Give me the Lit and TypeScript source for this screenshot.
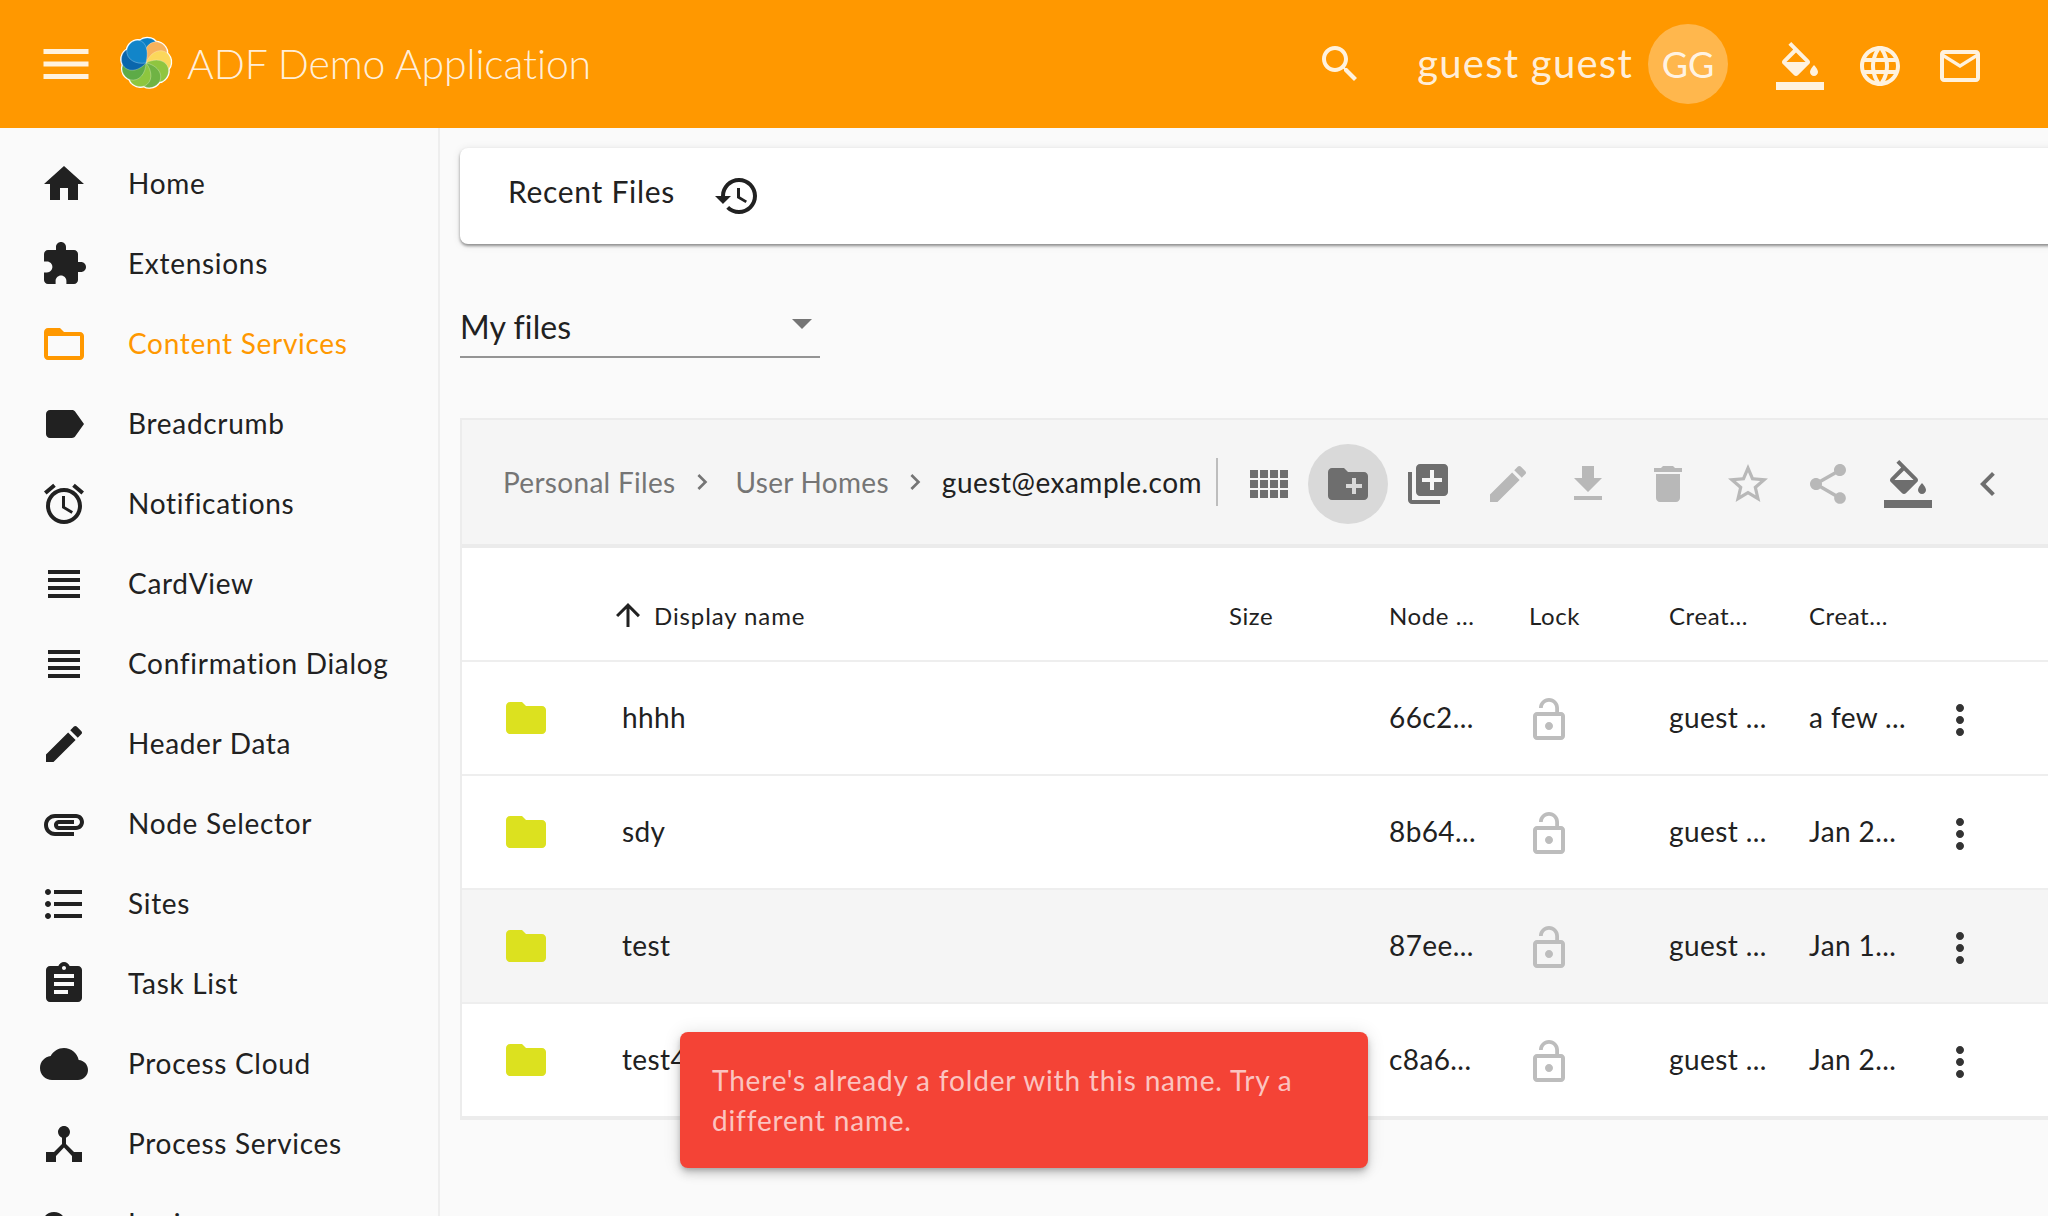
import { LitElement, css, html, svg } from 'lit';
import { customElement } from 'lit/decorators.js';

const P: Record<string, string> = {
  menu: 'M3 18h18v-2H3v2zm0-5h18v-2H3v2zm0-7v2h18V6H3z',
  home: 'M10 20v-6h4v6h5v-8h3L12 3 2 12h3v8z',
  extension: 'M20.5 11H19V7c0-1.1-.9-2-2-2h-4V3.5C13 2.12 11.88 1 10.5 1S8 2.12 8 3.5V5H4c-1.1 0-1.99.9-1.99 2v3.8H3.5c1.49 0 2.7 1.21 2.7 2.7s-1.21 2.7-2.7 2.7H2V20c0 1.1.9 2 2 2h3.8v-1.5c0-1.49 1.21-2.7 2.7-2.7 1.49 0 2.7 1.21 2.7 2.7V22H17c1.1 0 2-.9 2-2v-4h1.5c1.38 0 2.5-1.12 2.5-2.5S21.88 11 20.5 11z',
  folderOpen: 'M20 6h-8l-2-2H4c-1.1 0-1.99.9-1.99 2L2 18c0 1.1.9 2 2 2h16c1.1 0 2-.9 2-2V8c0-1.1-.9-2-2-2zm0 12H4V8h16v10z',
  label: 'M17.63 5.84C17.27 5.33 16.67 5 16 5L5 5.01C3.9 5.01 3 5.9 3 7v10c0 1.1.9 1.99 2 1.99L16 19c.67 0 1.27-.33 1.63-.84L22 12l-4.37-6.16z',
  alarm: 'M22 5.72l-4.6-3.86-1.29 1.53 4.6 3.86L22 5.72zM7.88 3.39L6.6 1.86 2 5.71l1.29 1.53 4.59-3.85zM12.5 8H11v6l4.75 2.85.75-1.23-4-2.37V8zM12 4c-4.97 0-9 4.03-9 9s4.03 9 9 9 9-4.03 9-9-4.03-9-9-9zm0 16c-3.87 0-7-3.13-7-7s3.13-7 7-7 7 3.13 7 7-3.13 7-7 7z',
  headline: 'M4 15h16v-2H4v2zm0 4h16v-2H4v2zm0-8h16V9H4v2zm0-6v2h16V5H4z',
  edit: 'M3 17.25V21h3.75L17.81 9.94l-3.75-3.75L3 17.25zM20.71 7.04c.39-.39.39-1.02 0-1.41l-2.34-2.34c-.39-.39-1.02-.39-1.41 0l-1.83 1.83 3.75 3.75 1.83-1.83z',
  attachment: 'M2 12.5C2 9.46 4.46 7 7.5 7H18c2.21 0 4 1.79 4 4s-1.79 4-4 4H9.5C8.12 15 7 13.88 7 12.5S8.12 10 9.5 10H17v2H9.41c-.55 0-.55 1 0 1H18c1.1 0 2-.9 2-2s-.9-2-2-2H7.5C5.57 9 4 10.57 4 12.5S5.57 16 7.5 16H17v2H7.5C4.46 18 2 15.54 2 12.5z',
  list: 'M4 10.5c-.83 0-1.5.67-1.5 1.5s.67 1.5 1.5 1.5 1.5-.67 1.5-1.5-.67-1.5-1.5-1.5zm0-6c-.83 0-1.5.67-1.5 1.5S3.17 7.5 4 7.5 5.5 6.83 5.5 6 4.83 4.5 4 4.5zm0 12c-.83 0-1.5.68-1.5 1.5s.68 1.5 1.5 1.5 1.5-.68 1.5-1.5-.67-1.5-1.5-1.5zM7 19h14v-2H7v2zm0-6h14v-2H7v2zm0-8v2h14V5H7z',
  assignment: 'M19 3h-4.18C14.4 1.84 13.3 1 12 1c-1.3 0-2.4.84-2.82 2H5c-1.1 0-2 .9-2 2v14c0 1.1.9 2 2 2h14c1.1 0 2-.9 2-2V5c0-1.1-.9-2-2-2zm-7 0c.55 0 1 .45 1 1s-.45 1-1 1-1-.45-1-1 .45-1 1-1zm2 14H7v-2h7v2zm3-4H7v-2h10v2zm0-4H7V7h10v2z',
  cloud: 'M19.35 10.04C18.67 6.59 15.64 4 12 4 9.11 4 6.6 5.64 5.35 8.04 2.34 8.36 0 10.91 0 14c0 3.31 2.69 6 6 6h13c2.76 0 5-2.24 5-5 0-2.64-2.05-4.78-4.65-4.96z',
  hub: 'M17 16l-4-4V8.82C14.16 8.4 15 7.3 15 6c0-1.66-1.34-3-3-3S9 4.34 9 6c0 1.3.84 2.4 2 2.82V12l-4 4H3v5h5v-3.05l4-4.2 4 4.2V21h5v-5h-4z',
  key: 'M12.65 10C11.83 7.67 9.61 6 7 6c-3.31 0-6 2.69-6 6s2.69 6 6 6c2.61 0 4.83-1.67 5.65-4H17v4h4v-4h2v-4H12.65zM7 14c-1.1 0-2-.9-2-2s.9-2 2-2 2 .9 2 2-.9 2-2 2z',
  search: 'M15.5 14h-.79l-.28-.27C15.41 12.59 16 11.11 16 9.5 16 5.91 13.09 3 9.5 3S3 5.91 3 9.5 5.91 16 9.5 16c1.61 0 3.09-.59 4.23-1.57l.27.28v.79l5 4.99L20.49 19l-4.99-5zm-6 0C7.01 14 5 11.99 5 9.5S7.01 5 9.5 5 14 7.01 14 9.5 11.99 14 9.5 14z',
  paint: 'M16.56 8.94L7.62 0 6.21 1.41l2.38 2.38-5.15 5.15c-.59.59-.59 1.54 0 2.12l5.5 5.5c.29.29.68.44 1.06.44s.77-.15 1.06-.44l5.5-5.5c.59-.58.59-1.53 0-2.12zM5.21 10L10 5.21 14.79 10H5.21zM19 11.5s-2 2.17-2 3.5c0 1.1.9 2 2 2s2-.9 2-2c0-1.33-2-3.5-2-3.5zM0 20h24v4H0z',
  language: 'M11.99 2C6.47 2 2 6.48 2 12s4.47 10 9.99 10C17.52 22 22 17.52 22 12S17.52 2 11.99 2zm6.93 6h-2.95c-.32-1.25-.78-2.45-1.38-3.56 1.84.63 3.37 1.91 4.33 3.56zM12 4.04c.83 1.2 1.48 2.53 1.91 3.96h-3.82c.43-1.43 1.08-2.76 1.91-3.96zM4.26 14C4.1 13.36 4 12.69 4 12s.1-1.36.26-2h3.38c-.08.66-.14 1.32-.14 2 0 .68.06 1.34.14 2H4.26zm.82 2h2.95c.32 1.25.78 2.45 1.38 3.56-1.84-.63-3.37-1.9-4.33-3.56zm2.95-8H5.08c.96-1.66 2.49-2.93 4.33-3.56C8.81 5.55 8.35 6.75 8.03 8zM12 19.96c-.83-1.2-1.48-2.53-1.91-3.96h3.82c-.43 1.43-1.08 2.76-1.91 3.96zM14.34 14H9.66c-.09-.66-.16-1.32-.16-2 0-.68.07-1.35.16-2h4.68c.09.65.16 1.32.16 2 0 .68-.07 1.34-.16 2zm.25 5.56c.6-1.11 1.06-2.31 1.38-3.56h2.95c-.96 1.65-2.49 2.93-4.33 3.56zM16.36 14c.08-.66.14-1.32.14-2 0-.68-.06-1.34-.14-2h3.38c.16.64.26 1.31.26 2s-.1 1.36-.26 2h-3.38z',
  mail: 'M20 4H4c-1.1 0-1.99.9-1.99 2L2 18c0 1.1.9 2 2 2h16c1.1 0 2-.9 2-2V6c0-1.1-.9-2-2-2zm0 14H4V8l8 5 8-5v10zm-8-7L4 6h16l-8 5z',
  history: 'M13 3c-4.97 0-9 4.03-9 9H1l3.89 3.89.07.14L9 12H6c0-3.87 3.13-7 7-7s7 3.13 7 7-3.13 7-7 7c-1.93 0-3.68-.79-4.94-2.06l-1.42 1.42C8.27 19.99 10.51 21 13 21c4.97 0 9-4.03 9-9s-4.03-9-9-9zm-1 5v5l4.28 2.54.72-1.21-3.5-2.08V8H12z',
  comfy: 'M3 9h4V5H3v4zm0 5h4v-4H3v4zm5 0h4v-4H8v4zm5 0h4v-4h-4v4zM8 9h4V5H8v4zm5-4v4h4V5h-4zm5 9h4v-4h-4v4zM3 19h4v-4H3v4zm5 0h4v-4H8v4zm5 0h4v-4h-4v4zm5 0h4v-4h-4v4zm0-14v4h4V5h-4z',
  newFolder: 'M20 6h-8l-2-2H4c-1.11 0-1.99.89-1.99 2L2 18c0 1.11.89 2 2 2h16c1.11 0 2-.89 2-2V8c0-1.11-.89-2-2-2zm-1 8h-3v3h-2v-3h-3v-2h3V9h2v3h3v2z',
  libraryAdd: 'M4 6H2v14c0 1.1.9 2 2 2h14v-2H4V6zm16-4H8c-1.1 0-2 .9-2 2v12c0 1.1.9 2 2 2h12c1.1 0 2-.9 2-2V4c0-1.1-.9-2-2-2zm-1 9h-4v4h-2v-4H9V9h4V5h2v4h4v2z',
  download: 'M19 9h-4V3H9v6H5l7 7 7-7zM5 18v2h14v-2H5z',
  trash: 'M6 19c0 1.1.9 2 2 2h8c1.1 0 2-.9 2-2V7H6v12zM19 4h-3.5l-1-1h-5l-1 1H5v2h14V4z',
  star: 'M22 9.24l-7.19-.62L12 2 9.19 8.63 2 9.24l5.46 4.73L5.82 21 12 17.27 18.18 21l-1.63-7.03L22 9.24zM12 15.4l-3.76 2.27 1-4.28-3.32-2.88 4.38-.38L12 6.1l1.71 4.04 4.38.38-3.32 2.88 1 4.28L12 15.4z',
  share: 'M18 16.08c-.76 0-1.44.3-1.96.77L8.91 12.7c.05-.23.09-.46.09-.7s-.04-.47-.09-.7l7.05-4.11c.54.5 1.25.81 2.04.81 1.66 0 3-1.34 3-3s-1.34-3-3-3-3 1.34-3 3c0 .24.04.47.09.7L8.04 9.81C7.5 9.31 6.79 9 6 9c-1.66 0-3 1.34-3 3s1.34 3 3 3c.79 0 1.5-.31 2.04-.81l7.12 4.16c-.05.21-.08.43-.08.65 0 1.61 1.31 2.92 2.92 2.92 1.61 0 2.92-1.31 2.92-2.92s-1.31-2.92-2.92-2.92z',
  left: 'M15.41 7.41L14 6l-6 6 6 6 1.41-1.41L10.83 12z',
  right: 'M10 6L8.59 7.41 13.17 12l-4.58 4.59L10 18l6-6z',
  up: 'M4 12l1.41 1.41L11 7.83V20h2V7.83l5.58 5.59L20 12l-8-8-8 8z',
  lockOpen: 'M12 17c1.1 0 2-.9 2-2s-.9-2-2-2-2 .9-2 2 .9 2 2 2zm6-9h-1V6c0-2.76-2.24-5-5-5S7 3.24 7 6h1.9c0-1.71 1.39-3.1 3.1-3.1 1.71 0 3.1 1.39 3.1 3.1v2H6c-1.1 0-2 .9-2 2v10c0 1.1.9 2 2 2h12c1.1 0 2-.9 2-2V10c0-1.1-.9-2-2-2zm0 12H6V10h12v10z',
  more: 'M12 8c1.1 0 2-.9 2-2s-.9-2-2-2-2 .9-2 2 .9 2 2 2zm0 2c-1.1 0-2 .9-2 2s.9 2 2 2 2-.9 2-2-.9-2-2-2zm0 6c-1.1 0-2 .9-2 2s.9 2 2 2 2-.9 2-2-.9-2-2-2z',
  folder: 'M10 4H4c-1.1 0-1.99.9-1.99 2L2 18c0 1.1.9 2 2 2h16c1.1 0 2-.9 2-2V8c0-1.1-.9-2-2-2h-8l-2-2z',
};

const ic = (name: string, cls = '') =>
  html`<svg class="ic ${cls}" viewBox="0 0 24 24"><path d=${P[name]}></path></svg>`;

const NAV = [
  ['home', 'Home'], ['extension', 'Extensions'], ['folderOpen', 'Content Services'],
  ['label', 'Breadcrumb'], ['alarm', 'Notifications'], ['headline', 'CardView'],
  ['headline', 'Confirmation Dialog'], ['edit', 'Header Data'], ['attachment', 'Node Selector'],
  ['list', 'Sites'], ['assignment', 'Task List'], ['cloud', 'Process Cloud'],
  ['hub', 'Process Services'], ['key', 'Login'],
];

const TOOLS = [
  ['comfy', ''], ['newFolder', 'active'], ['libraryAdd', ''], ['edit', 'off'], ['download', 'off'],
  ['trash', 'off'], ['star', 'off'], ['share', 'off'], ['paint', ''], ['left', ''],
];

const ROWS = [
  ['hhhh', '66c2...', 'a few ...', ''],
  ['sdy', '8b64...', 'Jan 2...', ''],
  ['test', '87ee...', 'Jan 1...', 'hover'],
  ['test4', 'c8a6...', 'Jan 2...', ''],
];

// clockwise from the top petal of the logo
const PETALS = ['#0b7fc4', '#f7b25c', '#fbd75b', '#8fc540', '#6fb344', '#8dc63f', '#5dab47', '#0a66ac', '#1285c9'];
const PETAL = 'M0 0C-10 -6 -14 -17 -7 -24C0 -30 12 -27 12 -18C12 -10 5 -4 0 0z';

@customElement('app-root')
export class AppRoot extends LitElement {
  static override styles = css`
    :host {
      display: block;
      position: relative;
      width: 2048px;
      height: 1216px;
      overflow: hidden;
      background: #fafafa;
      color: #212121;
      font-family: Lato, 'Noto Sans', sans-serif;
      font-size: 28px;
    }
    .ic { width: 48px; height: 48px; fill: currentColor; flex: none; display: block; }

    .header {
      display: flex;
      align-items: center;
      height: 128px;
      background: #ff9800;
      color: rgba(255, 255, 255, 0.87);
    }
    .burger { width: 60px; height: 60px; margin-left: 36px; }
    .logo { width: 60px; height: 60px; margin-left: 20px; flex: none; }
    .title { margin: 0 0 2px 11px; font-size: 41px; font-weight: 300; letter-spacing: -0.15px; white-space: nowrap; }
    .search { margin-left: auto; }
    .user { margin: 0 0 2px 53px; font-size: 40px; letter-spacing: 1.25px; white-space: nowrap; }
    .avatar {
      width: 80px;
      height: 80px;
      margin-left: 15px;
      border-radius: 50%;
      background: rgba(255, 255, 255, 0.3);
      display: flex;
      align-items: center;
      justify-content: center;
      font-size: 36px;
      margin-right: 48px;
    }
    .head-ic { margin-right: 32px; margin-top: 4px; }
    .head-ic.last { margin-right: 64px; }

    .body { display: flex; height: 1088px; }
    .side {
      width: 440px;
      flex: none;
      box-sizing: border-box;
      border-right: 2px solid #eeeeee;
      padding-top: 16px;
    }
    .nav { display: flex; align-items: center; height: 80px; padding-left: 40px; gap: 40px; letter-spacing: 0.7px; white-space: nowrap; }
    .nav span { margin-bottom: 2px; }
    .nav.on { color: #ff9800; }

    .main { flex: 1; min-width: 0; padding: 20px 0 0 20px; }
    .tab {
      display: flex;
      align-items: center;
      height: 96px;
      margin-right: -12px;
      padding-left: 48px;
      background: #fff;
      border-radius: 8px;
      box-shadow: 0 2px 3px rgba(0, 0, 0, 0.4), 0 1px 8px rgba(0, 0, 0, 0.1);
      gap: 38px;
    }
    .tab span { margin-bottom: 10px; font-size: 30px; letter-spacing: 0.7px; }

    .select {
      display: flex;
      align-items: center;
      justify-content: space-between;
      box-sizing: border-box;
      width: 360px;
      height: 58px;
      margin-top: 56px;
      border-bottom: 2px solid #949494;
      font-size: 32px;
      letter-spacing: 0.1px;
    }
    .select span { margin-bottom: 4px; }
    .select i {
      width: 0;
      height: 0;
      margin-right: 8px;
      margin-bottom: 8px;
      border-left: 10px solid transparent;
      border-right: 10px solid transparent;
      border-top: 10px solid #757575;
    }

    .panel { margin-top: 60px; border: 2px solid #ececec; border-right: 0; border-bottom-width: 4px; }
    .toolbar {
      display: flex;
      align-items: center;
      height: 120px;
      padding: 4px 0 0 41px;
      background: #f5f5f5;
      border-bottom: 4px solid #ebebeb;
      white-space: nowrap;
    }
    .crumbs { display: flex; align-items: center; width: 713px; flex: none; margin-bottom: 4px; }
    .crumb { color: #757575; letter-spacing: 0.3px; }
    .crumb-sep { width: 32px; height: 32px; color: #757575; margin: 0 18px 0 10px; }
    .crumb.now { color: #212121; margin-left: -7px; letter-spacing: 0.5px; }
    .rule { width: 2px; height: 48px; background: #bdbdbd; margin-right: 10px; margin-bottom: 4px; flex: none; }
    .tool {
      display: flex;
      align-items: center;
      justify-content: center;
      width: 80px;
      height: 80px;
      flex: none;
      border-radius: 50%;
      color: #6e6e6e;
    }
    .tool.active { background: #d9d9d9; }
    .tool.off { color: #b8b8b8; }

    .row {
      display: grid;
      grid-template-columns: 160px 607px 160px 140px 140px 140px 120px 1fr;
      align-items: center;
      height: 112px;
      background: #fff;
      border-bottom: 2px solid #eeeeee;
      white-space: nowrap;
      letter-spacing: 0.4px;
    }
    .row span { margin-bottom: 2px; }
    .row.last { border-bottom: 0; }
    .row.hover { background: #f5f5f5; }
    .row.th { font-size: 24px; letter-spacing: 0.6px; height: 88px; padding-top: 24px; }
    .sort { display: flex; align-items: center; gap: 8px; margin-left: -12px; letter-spacing: 0.9px; }
    .sort .ic { width: 36px; height: 36px; }
    .folder { color: #dce11f; margin-left: 40px; }
    .lock { color: #bdbdbd; margin-left: -4px; margin-top: 4px; }
    .more { color: #333; margin-left: 7px; margin-top: 4px; }

    .snack {
      position: absolute;
      left: 680px;
      top: 1032px;
      width: 688px;
      height: 136px;
      box-sizing: border-box;
      padding: 28px 32px;
      border-radius: 8px;
      background: #f44336;
      color: rgba(255, 255, 255, 0.7);
      line-height: 40px;
      letter-spacing: 0.83px;
      box-shadow: 0 3px 5px -1px rgba(0, 0, 0, 0.2), 0 6px 10px 0 rgba(0, 0, 0, 0.14), 0 1px 18px 0 rgba(0, 0, 0, 0.12);
    }
  `;

  override render() {
    return html`
      <header class="header">
        ${ic('menu', 'burger')}
        <svg class="logo" viewBox="-32.5 -31.4 65 65">
          ${PETALS.map((_, i) => svg`<path transform="rotate(${i * 40})" fill="#fff" stroke="#fff" stroke-width="2.4" d=${PETAL}></path>`)}
          ${PETALS.map((c, i) => svg`<path transform="rotate(${i * 40})" fill=${c} stroke="#fff" stroke-opacity="0.45" stroke-width="0.6" d=${PETAL}></path>`)}
        </svg>
        <span class="title">ADF Demo Application</span>
        ${ic('search', 'search')}
        <span class="user">guest guest</span>
        <div class="avatar">GG</div>
        ${ic('paint', 'head-ic')}${ic('language', 'head-ic')}${ic('mail', 'head-ic last')}
      </header>
      <div class="body">
        <nav class="side">
          ${NAV.map(([i, t]) => html`<div class="nav ${t === 'Content Services' ? 'on' : ''}">${ic(i)}<span>${t}</span></div>`)}
        </nav>
        <main class="main">
          <div class="tab"><span>Recent Files</span>${ic('history')}</div>
          <div class="select"><span>My files</span><i></i></div>
          <section class="panel">
            <div class="toolbar">
              <div class="crumbs">
                <span class="crumb">Personal Files</span>${ic('right', 'crumb-sep')}
                <span class="crumb">User Homes</span>${ic('right', 'crumb-sep')}
                <span class="crumb now">guest@example.com</span>
              </div>
              <div class="rule"></div>
              ${TOOLS.map(([i, c]) => html`<div class="tool ${c}">${ic(i)}</div>`)}
            </div>
            <div class="row th">
              <span></span>
              <span class="sort">${ic('up')}Display name</span>
              <span>Size</span><span>Node ...</span><span>Lock</span><span>Creat...</span><span>Creat...</span><span></span>
            </div>
            ${ROWS.map(([name, node, date, cls], i) => html`
              <div class="row ${cls} ${i === ROWS.length - 1 ? 'last' : ''}">
                ${ic('folder', 'folder')}
                <span>${name}</span>
                <span></span>
                <span>${node}</span>
                ${ic('lockOpen', 'lock')}
                <span>guest ...</span>
                <span>${date}</span>
                ${ic('more', 'more')}
              </div>`)}
          </section>
        </main>
      </div>
      <div class="snack">There's already a folder with this name. Try a different name.</div>
    `;
  }
}
